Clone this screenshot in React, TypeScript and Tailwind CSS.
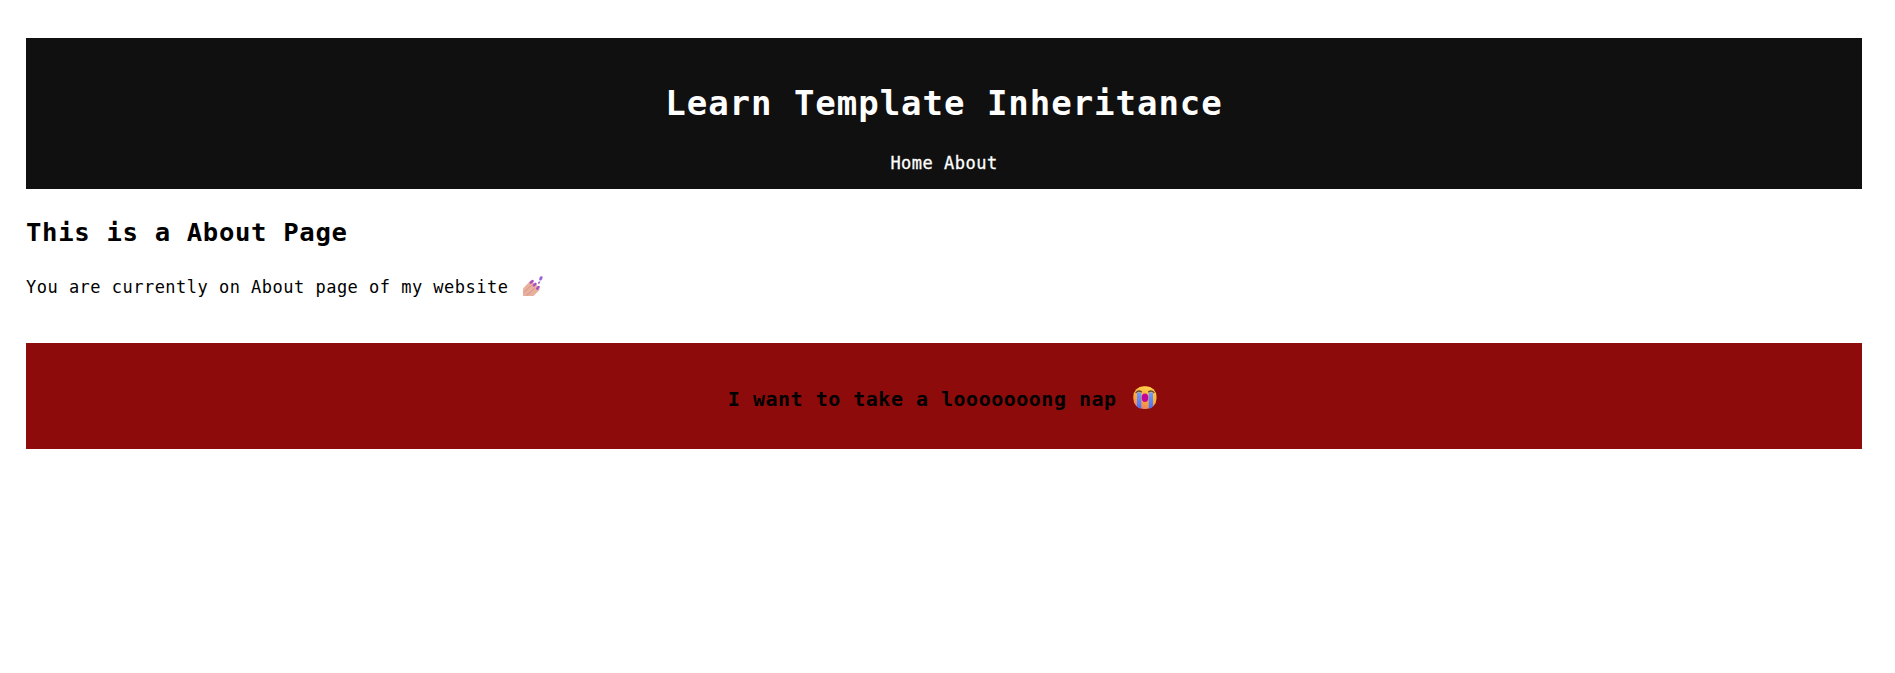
function NailPolish() {
  return (
    <svg viewBox="0 0 20 20" className="mt-px ml-[3.5px] h-5 w-5 shrink-0">
      <path d="M0 12.5 L7.5 4.5 L11 7 L14 9.5 L16.5 12 L16.5 14 L10.5 20 H0 Z" fill="#e9b09e" />
      <path d="M1 16.5 L8 9.5 M3.5 19.5 L12 12" stroke="#cf8d80" strokeWidth="0.8" fill="none" />
      <path d="M7.8 6.6 L9.6 5 M10.8 9.4 L12.5 7.8 M14.2 12.6 L15.6 11" stroke="#a94fc4" strokeWidth="2.5" strokeLinecap="round" fill="none" />
      <path d="M17.6 3 L18.2 1.6" stroke="#9d62cf" strokeWidth="2.8" strokeLinecap="round" />
      <path d="M16 6.6 L17 4.8" stroke="#c3aae4" strokeWidth="1.4" />
      <circle cx="15.9" cy="6.8" r="0.9" fill="#8d4dbf" />
    </svg>
  );
}

function LoudlyCrying() {
  return (
    <svg viewBox="0 0 24 24" className="mt-px mr-[3.5px] ml-[3.5px] h-6 w-6 shrink-0">
      <defs>
        <linearGradient id="face" x1="0.75" y1="0" x2="0.35" y2="1">
          <stop offset="0" stopColor="#ffd34d" />
          <stop offset="0.65" stopColor="#fba43a" />
          <stop offset="1" stopColor="#ee7d62" />
        </linearGradient>
        <linearGradient id="tear" x1="0" y1="0" x2="0" y2="1">
          <stop offset="0" stopColor="#6e9cff" />
          <stop offset="1" stopColor="#4d6ff0" />
        </linearGradient>
      </defs>
      <rect x="0.3" y="0.3" width="23.2" height="22.8" rx="10.3" fill="url(#face)" />
      <path d="M4 6.5 H8.3 V22.8 Q5.8 22.2 4 20.5 Z M15.7 6.5 H20 V20.5 Q18.2 22.2 15.7 22.8 Z" fill="url(#tear)" />
      <path d="M3 6.6 Q5.2 3.9 8.4 5.8 M15.6 5.8 Q18.8 3.9 21 6.6" stroke="#604738" strokeWidth="1.3" strokeLinecap="round" fill="none" />
      <ellipse cx="12" cy="11.8" rx="3.3" ry="4.2" fill="#c30795" />
    </svg>
  );
}

export default function App() {
  return (
    <div className="min-h-[673px] bg-white pt-[38px] pr-[33px] pl-[26px] font-['DejaVu_Sans_Mono',monospace] text-black">
      <header className="flex h-[151px] flex-col items-center bg-[#101010] pt-[45px] text-white">
        <h1 className="text-[34px] leading-10 font-bold tracking-[0.97px]">Learn Template Inheritance</h1>
        <nav className="mt-7 flex gap-[10.72px] text-[17px] leading-6 tracking-[0.485px] [-webkit-text-stroke:0.3px_white]">
          <a href="#home">Home</a>
          <a href="#about">About</a>
        </nav>
      </header>
      <main>
        <h2 className="mt-[27px] text-[25.6px] leading-8 font-bold tracking-[0.67px]">This is a About Page</h2>
        <p className="mt-[27px] flex text-[17px] leading-6 tracking-[0.485px]">
          <span className="whitespace-pre">{"You are currently on About page of my website "}</span>
          <NailPolish />
        </p>
      </main>
      <footer className="mt-11 flex h-[106px] justify-center bg-[#8e0b0b] pt-[42px]">
        <h3 className="flex text-[20px] leading-7 font-bold tracking-[0.5px]">
          <span className="whitespace-pre">{"I want to take a looooooong nap "}</span>
          <LoudlyCrying />
        </h3>
      </footer>
    </div>
  );
}
